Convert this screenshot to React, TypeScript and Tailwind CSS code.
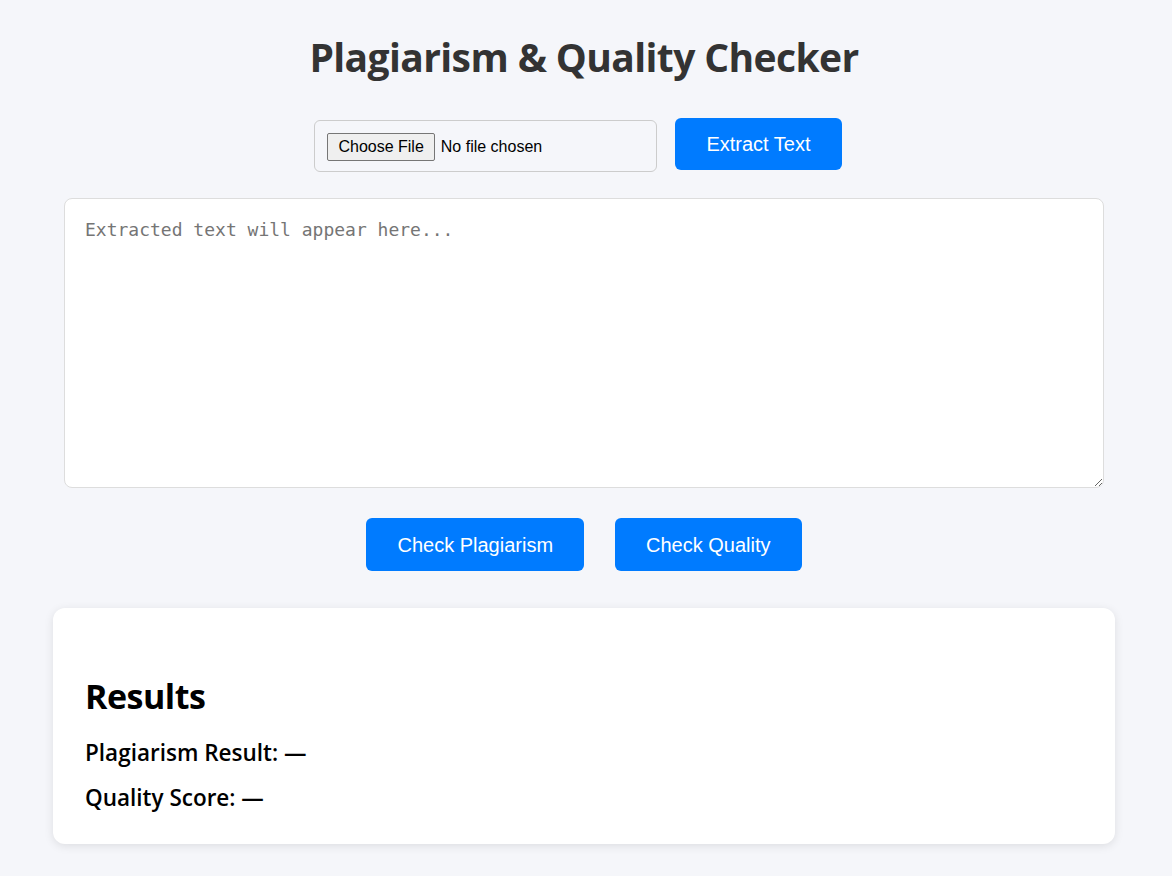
import React, { useState } from 'react';

export default function App() {
  const [text, setText] = useState('');

  return (
    <div className="min-h-screen bg-[#f5f6fa] pb-8 font-['Open_Sans',sans-serif]">
      <div className="pl-[53px] pr-[57px]">
        <h1 className="pt-[33px] text-center text-[39px] font-bold leading-[48px] text-[#333] tracking-[-0.6px]">
          Plagiarism &amp; Quality Checker
        </h1>

        <div className="mt-[37px] flex items-start justify-center gap-[18px] pr-[12px]">
          <input
            type="file"
            className="mt-[2px] h-[52px] w-[343px] rounded-md border border-[#ccc] px-3 py-3 font-['Liberation_Sans',sans-serif] text-base text-black file:mr-[6px] file:rounded-[2px] file:border file:border-[#767676] file:bg-[#efefef] file:px-[10px] file:py-[1px] file:text-black"
          />
          <button className="h-[52px] rounded-md bg-[#007bff] px-[31px] font-['Liberation_Sans',sans-serif] text-[20px] text-white">
            Extract Text
          </button>
        </div>

        <textarea
          value={text}
          onChange={(e) => setText(e.target.value)}
          placeholder="Extracted text will appear here..."
          className="mx-[11px] mt-[26px] block h-[290px] w-[1040px] rounded-lg border border-[#ddd] bg-white px-5 py-5 font-['DejaVu_Sans_Mono',monospace] text-[18px] leading-[22px] text-[#222] placeholder:text-[#757575]"
        />

        <div className="mt-[30px] flex justify-center gap-[31px]">
          <button className="h-[53px] rounded-md bg-[#007bff] px-[31px] font-['Liberation_Sans',sans-serif] text-[20px] text-white">
            Check Plagiarism
          </button>
          <button className="h-[53px] rounded-md bg-[#007bff] px-[31px] font-['Liberation_Sans',sans-serif] text-[20px] text-white">
            Check Quality
          </button>
        </div>

        <div className="mt-[37px] h-[236px] rounded-xl bg-white px-8 pt-[66px] shadow-[0_2px_10px_rgba(0,0,0,0.1)]">
          <h2 className="text-[34px] font-bold leading-[44px] text-black tracking-[-0.5px]">Results</h2>
          <p className="mt-[20px] text-[22.5px] font-semibold leading-[30px] text-black">Plagiarism Result: —</p>
          <p className="mt-[15px] text-[22.5px] font-semibold leading-[30px] text-black">Quality Score: —</p>
        </div>
      </div>
    </div>
  );
}
